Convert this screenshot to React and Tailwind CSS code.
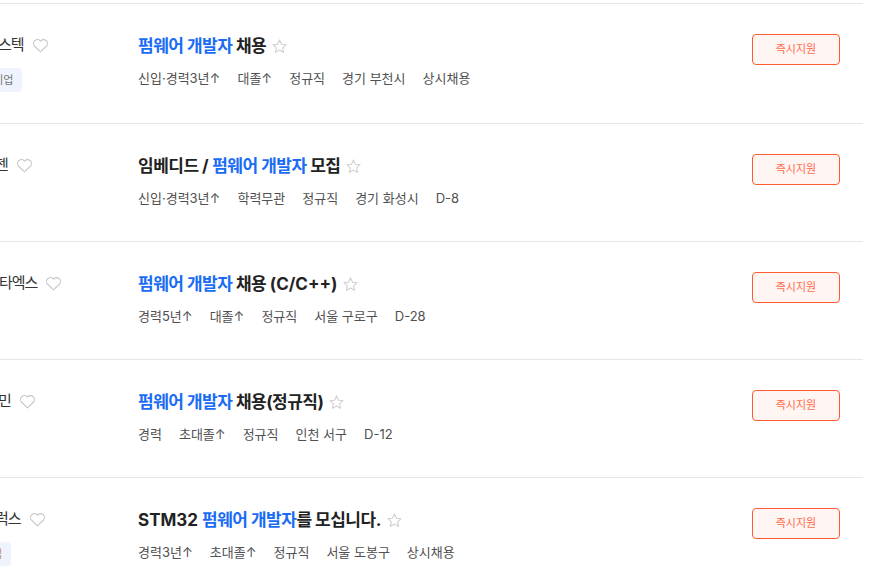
import React from "react";

const BLUE = "펌웨어 개발자";

const rows = [
  {
    company: "스텍",
    shift: "-ml-[2px]",
    tag: { text: "벤처기업", shift: "-ml-[36px]", color: "text-[#777]" },
    title: [{ t: BLUE, blue: true }, { t: " 채용" }],
    meta: ["신입·경력3년↑", "대졸↑", "정규직", "경기 부천시", "상시채용"],
    h: "h-[120px]",
  },
  {
    company: "젠",
    shift: "-ml-[5px]",
    title: [{ t: "임베디드 " }, { t: "/", latin: true }, { t: " " }, { t: BLUE, blue: true }, { t: " 모집" }],
    meta: ["신입·경력3년↑", "학력무관", "정규직", "경기 화성시", "D-8"],
    h: "h-[118px]",
  },
  {
    company: "타엑스",
    shift: "-ml-[1px]",
    title: [{ t: BLUE, blue: true }, { t: " 채용 " }, { t: "(C/C++)", latin: true }],
    meta: ["경력5년↑", "대졸↑", "정규직", "서울 구로구", "D-28"],
    h: "h-[118px]",
  },
  {
    company: "민",
    shift: "-ml-[2px]",
    title: [{ t: BLUE, blue: true }, { t: " 채용(정규직)" }],
    meta: ["경력", "초대졸↑", "정규직", "인천 서구", "D-12"],
    h: "h-[118px]",
  },
  {
    company: "럭스",
    shift: "-ml-[5px]",
    tag: { text: "대기업", shift: "-ml-[37px]", color: "text-[#c9925a]" },
    title: [{ t: "STM32 ", latin: true }, { t: BLUE, blue: true }, { t: "를 모십니다." }],
    meta: ["경력3년↑", "초대졸↑", "정규직", "서울 도봉구", "상시채용"],
    h: "h-[118px]",
  },
];

function Heart() {
  return (
    <svg width="17" height="15" viewBox="0 0 24 21" fill="none" stroke="#c8c8c8" strokeWidth="1.6" strokeLinejoin="round">
      <path d="M12 19.5 3.4 11.2A5.2 5.2 0 0 1 12 4.3a5.2 5.2 0 0 1 8.6 6.9Z" />
    </svg>
  );
}

function Star() {
  return (
    <svg width="17" height="17" viewBox="0 0 24 24" fill="none" stroke="#cfcfcf" strokeWidth="1.5" strokeLinejoin="round">
      <path d="M12 2.8l2.8 6 6.5.7-4.9 4.4 1.4 6.4L12 17l-5.8 3.3 1.4-6.4-4.9-4.4 6.5-.7Z" />
    </svg>
  );
}

function Row({ row }) {
  return (
    <div className={`flex items-start border-t border-[#e6e6e6] pt-[30px] ${row.h}`}>
      <div className="w-[138px] shrink-0 overflow-hidden">
        <div className={`flex h-[22px] items-center ${row.shift}`}>
          <span className="whitespace-nowrap text-[15px] tracking-[-1px] text-[#333]">{row.company}</span>
          <span className="ml-[8px] flex items-center">
            <Heart />
          </span>
        </div>
        {row.tag && (
          <div className={`mt-[12px] flex ${row.tag.shift}`}>
            <span className={`flex h-[24px] items-center whitespace-nowrap rounded-[4px] bg-[#eef3fd] px-[9px] text-[11px] ${row.tag.color}`}>
              {row.tag.text}
            </span>
          </div>
        )}
      </div>

      <div className="flex flex-col">
        <div className="flex h-[24px] items-center">
          <h3 className="whitespace-pre text-[17px] font-bold leading-[24px] tracking-[-0.5px] text-[#222]">
            {row.title.map((p, i) => (
              <span
                key={i}
                className={`${p.blue ? "text-[#1a6cf5]" : ""} ${p.latin ? "tracking-normal" : ""}`}
              >
                {p.t}
              </span>
            ))}
          </h3>
          <span className="ml-[5px] flex items-center">
            <Star />
          </span>
        </div>
        <div className="mt-[11px] flex h-[20px] items-center gap-[17px] text-[13px] text-[#505050]">
          {row.meta.map((m, i) => (
            <span key={i} className="whitespace-nowrap">
              {m}
            </span>
          ))}
        </div>
      </div>

      <button className="ml-auto mr-[23px] flex h-[31px] w-[88px] shrink-0 items-center justify-center rounded-[4px] border border-[#ff5a30] bg-[#fff6f4] text-[11px] text-[#ff6a4a]">
        즉시지원
      </button>
    </div>
  );
}

export default function App() {
  return (
    <div className="h-[587px] w-[878px] overflow-hidden bg-white pt-[3px] font-['Inter','Noto_Sans_CJK_KR',sans-serif]">
      <div className="w-[863px]">
        {rows.map((r, i) => (
          <Row key={i} row={r} />
        ))}
      </div>
    </div>
  );
}
